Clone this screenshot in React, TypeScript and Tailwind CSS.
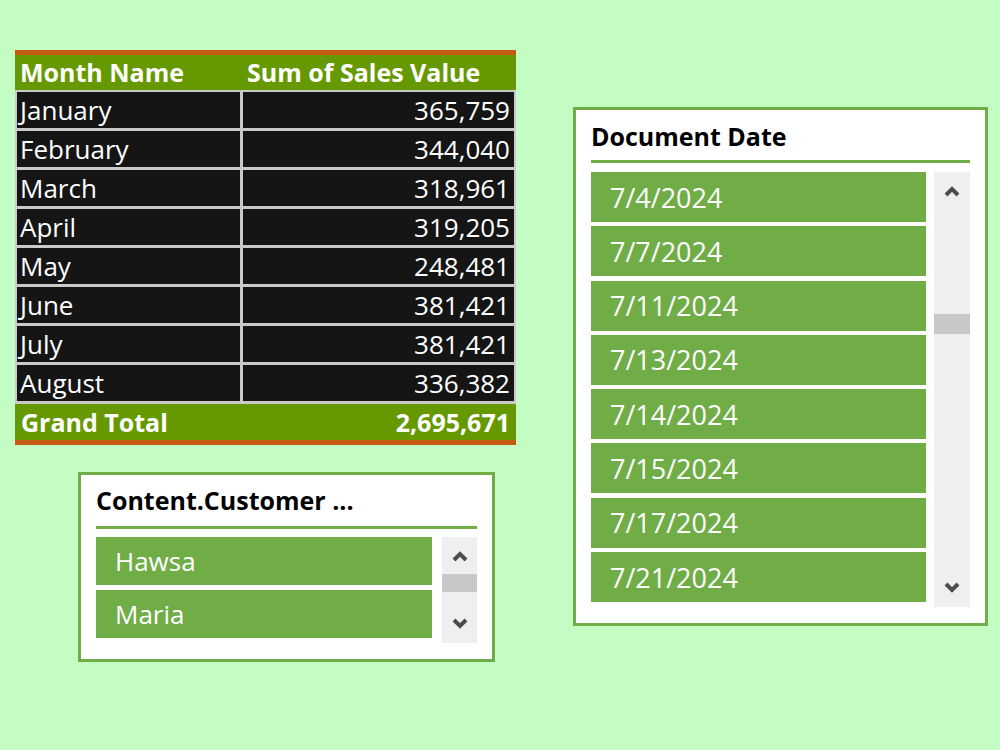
const months = [
  ["January", "365,759"],
  ["February", "344,040"],
  ["March", "318,961"],
  ["April", "319,205"],
  ["May", "248,481"],
  ["June", "381,421"],
  ["July", "381,421"],
  ["August", "336,382"],
];

const dates = [
  "7/4/2024",
  "7/7/2024",
  "7/11/2024",
  "7/13/2024",
  "7/14/2024",
  "7/15/2024",
  "7/17/2024",
  "7/21/2024",
];

const font = { fontFamily: '"Open Sans", "Liberation Sans", sans-serif' };

function Chevron({ up }: { up?: boolean }) {
  return (
    <svg className="h-[12px] w-[18px] shrink-0" viewBox="0 0 18 12" aria-hidden="true">
      <polyline
        points={up ? "3,10 9,4 15,10" : "3,2 9,8 15,2"}
        fill="none"
        stroke="#4d4d4d"
        strokeWidth={4}
      />
    </svg>
  );
}

export default function App() {
  return (
    <div className="min-h-[750px] bg-[#c4fdc4]" style={font}>
      <div className="flex items-start pl-[15px] pt-[50px]">
        {/* Left column: pivot table + customer slicer */}
        <div className="flex flex-col">
          <div className="w-[501px] text-white">
            <div className="h-[5px] bg-[#c55a11]" />
            <div className="grid h-[35px] grid-cols-[229px_1fr] items-center bg-[#669900] text-[25px] font-bold leading-none">
              <span className="pl-[5px]">Month Name</span>
              <span className="pl-[3px]">Sum of Sales Value</span>
            </div>
            <div className="grid grid-cols-[223px_1fr] gap-[3px] bg-[#c9c9c9] px-[2px] pb-[3px] pt-[2px]">
              {months.map(([m, v]) => (
                <div key={m} className="contents">
                  <div className="flex h-[36px] items-center bg-[#151515] pl-[3px] text-[26px] leading-none">
                    {m}
                  </div>
                  <div className="flex h-[36px] items-center justify-end bg-[#151515] pr-[4px] text-[26px] leading-none">
                    {v}
                  </div>
                </div>
              ))}
            </div>
            <div className="flex h-[36px] items-center justify-between bg-[#669900] px-[6px] text-[25px] font-bold leading-none">
              <span>Grand Total</span>
              <span>2,695,671</span>
            </div>
            <div className="h-[5px] bg-[#c55a11]" />
          </div>

          {/* Customer slicer */}
          <div className="ml-[63px] mt-[27px] h-[190px] w-[417px] border-[3px] border-[#70ad47] bg-white">
            <div className="px-[15px] pt-[12px]">
              <div className="h-[26px] text-[25px] font-bold leading-[26px] text-black">
                Content.Customer ...
              </div>
              <div className="mt-[13px] h-[3px] bg-[#70ad47]" />
              <div className="mt-[8px] flex gap-[10px]">
                <div className="flex w-[336px] flex-col gap-[5px]">
                  {["Hawsa", "Maria"].map((n) => (
                    <div
                      key={n}
                      className="flex h-[48px] items-center bg-[#70ad47] pl-[19px] text-[26px] leading-none text-white"
                    >
                      {n}
                    </div>
                  ))}
                </div>
                <div className="flex h-[106px] w-[35px] shrink-0 flex-col items-center bg-[#efefef]">
                  <div className="flex h-[37px] items-center">
                    <Chevron up />
                  </div>
                  <div className="h-[18px] w-full bg-[#c8c8c8]" />
                  <div className="flex-1" />
                  <div className="flex h-[38px] items-center">
                    <Chevron />
                  </div>
                </div>
              </div>
            </div>
          </div>
        </div>

        {/* Document date slicer */}
        <div className="ml-[57px] mt-[57px] h-[519px] w-[415px] border-[3px] border-[#70ad47] bg-white">
          <div className="px-[15px] pt-[12px]">
            <div className="h-[28px] text-[25px] font-bold leading-[28px] text-black">
              Document Date
            </div>
            <div className="mt-[10px] h-[3px] bg-[#70ad47]" />
            <div className="mt-[9px] flex gap-[8px]">
              <div className="flex w-[336px] flex-col gap-[4.3px]">
                {dates.map((d) => (
                  <div
                    key={d}
                    className="flex h-[50px] items-center bg-[#70ad47] pl-[19px] text-[27px] leading-none text-white"
                  >
                    {d}
                  </div>
                ))}
              </div>
              <div className="flex h-[435px] w-[36px] flex-col items-center bg-[#efefef]">
                <div className="flex h-[38px] items-center">
                  <Chevron up />
                </div>
                <div className="mt-[104px] h-[20px] w-full bg-[#c8c8c8]" />
                <div className="flex-1" />
                <div className="flex h-[38px] items-center">
                  <Chevron />
                </div>
              </div>
            </div>
          </div>
        </div>
      </div>
    </div>
  );
}
